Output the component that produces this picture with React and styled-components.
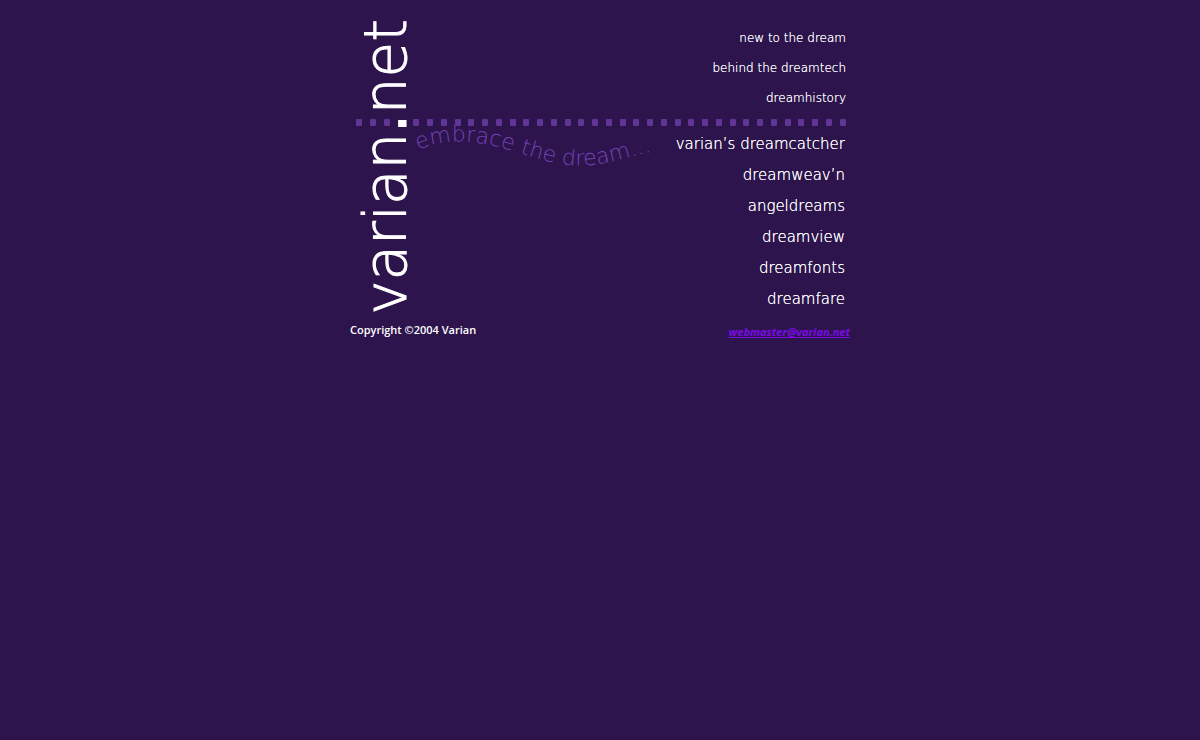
import React from 'react';
import styled, { createGlobalStyle } from 'styled-components';

const GlobalStyle = createGlobalStyle`
    body {
        margin: 0;
        background: #2d144d;
        color: #ffffff;
        font-family: "Open Sans", "Noto Sans", sans-serif;
    }
`;

const Page = styled.div`
    max-width: 500px;
    margin: 0 auto;
    padding-top: 15px;
`;

const Banner = styled.main`
    display: grid;
    grid-template-columns: 64px 1fr auto;
    grid-template-rows: auto auto auto;
    padding: 0 4px 5px 6px;
`;

const Logo = styled.h1`
    grid-column: 1;
    grid-row: 1 / 4;
    align-self: end;
    justify-self: start;
    margin: 0;
    font-family: "DejaVu Sans Light", "DejaVu Sans", sans-serif;
    font-size: 58px;
    font-weight: 200;
    line-height: 60px;
    writing-mode: vertical-rl;
    transform: rotate(180deg);
    -webkit-text-stroke: 1px #ffffff;
`;

const LogoStop = styled.span`
    font-family: "DejaVu Sans", sans-serif;
    font-weight: 400;
`;

const Menu = styled.nav`
    grid-column: 3;
    grid-row: ${(props) => props.$row};
    display: flex;
    flex-direction: column;
    align-items: flex-end;
    padding: ${(props) => (props.$large ? '3px 1px 0 0' : '8px 0 6px')};
`;

const MenuLink = styled.a`
    color: #ffffff;
    font-family: "DejaVu Sans Light", "DejaVu Sans", sans-serif;
    font-size: ${(props) => (props.$large ? '15px' : '12px')};
    font-weight: 200;
    line-height: ${(props) => (props.$large ? '31px' : '30px')};
    text-decoration: none;
    text-shadow: 0 0 0 #ffffff;
    white-space: nowrap;

    &:hover {
        color: #a27bd6;
    }
`;

const DotLine = styled.div`
    grid-column: 1 / 4;
    grid-row: 2;
    display: flex;
    justify-content: space-between;
`;

const Dot = styled.span`
    width: 6px;
    height: 7px;
    border-radius: 1px;
    background: #5f3596;

    /* leaves room for the full stop of the logo */
    &:nth-child(3) {
        margin-right: 16px;
    }
`;

const Slogan = styled.svg`
    grid-column: 2;
    grid-row: 3;
    display: block;
    width: 244px;
    height: 50px;
    margin: -4px 0 0 -6px;
    overflow: visible;

    text {
        fill: #7442b5;
        font-family: "DejaVu Sans Light", "DejaVu Sans", sans-serif;
        font-size: 22px;
        font-weight: 200;
    }
`;

const Footer = styled.footer`
    display: flex;
    justify-content: space-between;
    font-size: 11px;
    font-weight: 600;
    line-height: 20px;
`;

const Mail = styled.a`
    color: #7a0be6;
    font-style: italic;
    font-weight: 700;
    padding-top: 2px;
`;

const guideLinks = ['new to the dream', 'behind the dreamtech', 'dreamhistory'];

const dreamLinks = [
    'varian’s dreamcatcher',
    'dreamweav’n',
    'angeldreams',
    'dreamview',
    'dreamfonts',
    'dreamfare',
];

const DOT_COUNT = 35;

function App() {
    return (
        <Page>
            <GlobalStyle />
            <Banner>
                <DotLine>
                    {Array.from({ length: DOT_COUNT }, (_, i) => (
                        <Dot key={i} />
                    ))}
                </DotLine>
                <Logo>varian<LogoStop>.</LogoStop>net</Logo>
                <Menu $row={1} aria-label="about">
                    {guideLinks.map((text) => (
                        <MenuLink key={text} href="#">{text}</MenuLink>
                    ))}
                </Menu>
                <Slogan viewBox="0 0 244 50">
                    <path
                        id="wave"
                        d="M4 28 C30 16 62 17 102 30 S164 48 200 39 S236 30 270 20"
                        fill="none"
                    />
                    <text>
                        <textPath href="#wave">embrace the dream...</textPath>
                    </text>
                </Slogan>
                <Menu $row={3} $large aria-label="dreams">
                    {dreamLinks.map((text) => (
                        <MenuLink key={text} href="#" $large>{text}</MenuLink>
                    ))}
                </Menu>
            </Banner>
            <Footer>
                <span>Copyright ©2004 Varian</span>
                <Mail href="mailto:webmaster@varian.net">webmaster@varian.net</Mail>
            </Footer>
        </Page>
    );
}

export default App;
